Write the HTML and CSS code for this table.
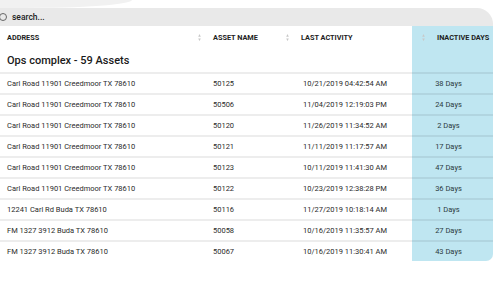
FILE: index.html
```html
<!DOCTYPE html>
<html>
<head>
<meta charset="utf-8">
<link rel="stylesheet" href="styles.css">
</head>
<body>
<div class="top"><div class="top-arc"></div></div>
<div class="search"><span class="search-ring"></span><span class="search-text">search...</span></div>
<div class="table">
  <div class="row head">
    <div class="c1">ADDRESS</div>
    <div class="c2"><svg class="sort" viewBox="0 0 3 8"><path d="M1.5 0 L3 3 L0 3 Z M1.5 8 L3 5 L0 5 Z"/></svg><span>ASSET NAME</span></div>
    <div class="c3"><svg class="sort" viewBox="0 0 3 8"><path d="M1.5 0 L3 3 L0 3 Z M1.5 8 L3 5 L0 5 Z"/></svg><span>LAST ACTIVITY</span></div>
    <div class="c4"><svg class="sort" viewBox="0 0 3 8"><path d="M1.5 0 L3 3 L0 3 Z M1.5 8 L3 5 L0 5 Z"/></svg><span>INACTIVE DAYS</span></div>
  </div>
  <div class="row group">
    <div class="c1 title">Ops complex - 59 Assets</div>
    <div class="c2"></div>
    <div class="c3"></div>
    <div class="c4"></div>
  </div>
  <div class="row data"><div class="c1">Carl Road 11901 Creedmoor TX 78610</div><div class="c2">50125</div><div class="c3">10/21/2019 04:42:54 AM</div><div class="c4">38 Days</div></div>
  <div class="row data"><div class="c1">Carl Road 11901 Creedmoor TX 78610</div><div class="c2">50506</div><div class="c3">11/04/2019 12:19:03 PM</div><div class="c4">24 Days</div></div>
  <div class="row data"><div class="c1">Carl Road 11901 Creedmoor TX 78610</div><div class="c2">50120</div><div class="c3">11/26/2019 11:34:52 AM</div><div class="c4">2 Days</div></div>
  <div class="row data"><div class="c1">Carl Road 11901 Creedmoor TX 78610</div><div class="c2">50121</div><div class="c3">11/11/2019 11:17:57 AM</div><div class="c4">17 Days</div></div>
  <div class="row data"><div class="c1">Carl Road 11901 Creedmoor TX 78610</div><div class="c2">50123</div><div class="c3">10/11/2019 11:41:30 AM</div><div class="c4">47 Days</div></div>
  <div class="row data"><div class="c1">Carl Road 11901 Creedmoor TX 78610</div><div class="c2">50122</div><div class="c3">10/23/2019 12:38:28 PM</div><div class="c4">36 Days</div></div>
  <div class="row data"><div class="c1">12241 Carl Rd Buda TX 78610</div><div class="c2">50116</div><div class="c3">11/27/2019 10:18:14 AM</div><div class="c4">1 Days</div></div>
  <div class="row data"><div class="c1">FM 1327 3912 Buda TX 78610</div><div class="c2">50058</div><div class="c3">10/16/2019 11:35:57 AM</div><div class="c4">27 Days</div></div>
  <div class="row data last"><div class="c1">FM 1327 3912 Buda TX 78610</div><div class="c2">50067</div><div class="c3">10/16/2019 11:30:41 AM</div><div class="c4">43 Days</div></div>
</div>
</body>
</html>
```
FILE: styles.css
```css
html, body {
  margin: 0;
  padding: 0;
  background: #ffffff;
  font-family: Roboto, "Liberation Sans", sans-serif;
  color: #222;
  width: 500px;
  height: 290px;
  overflow: hidden;
}
.top {
  height: 8px;
  display: flex;
}
.top-arc {
  width: 132px;
  height: 8px;
  background: #f1f1f1;
  border-bottom-right-radius: 110px 8px;
}
.search {
  width: 493px;
  height: 18px;
  background: #e9e9e9;
  border-top-right-radius: 16px;
  display: flex;
  align-items: center;
}
.search-ring {
  width: 6px;
  height: 6px;
  border: 1px solid #666;
  border-radius: 50%;
  margin-left: -1px;
}
.search-text {
  margin-left: 5px;
  font-size: 8.5px;
  font-weight: 500;
  color: #222;
}
.table {
  width: 493px;
}
.row {
  display: grid;
  grid-template-columns: 192px 94px 126px 81px;
}
.row > div {
  display: flex;
  align-items: center;
}
.c4 {
  background: #bfe6f1;
}
.head > div {
  height: 23px;
  font-size: 7.3px;
  font-weight: 700;
  color: #222;
}
.head .c1 { padding-left: 7px; }
.head .c2 { padding-left: 6px; }
.head .c3 { padding-left: 0; }
.head .c4 { padding-left: 10px; }
.sort {
  width: 3px;
  height: 7px;
  fill: #c8c8c8;
  margin-right: 12px;
  flex: none;
}
.group > div {
  height: 23px;
}
.title {
  padding-left: 7px;
  font-size: 11px;
  font-weight: 500;
  color: #1a1a1a;
}
.data > div {
  height: 19px;
  border-top: 2px solid rgba(0, 0, 0, 0.07);
  font-size: 7.5px;
  color: #2a2a2a;
}
.data .c1 { padding-left: 7px; }
.data .c2 { padding-left: 21px; }
.data .c3 { padding-left: 17px; }
.data .c4 { justify-content: center; padding-right: 8px; color: #2b3a40; }
.last .c4 {
  border-bottom-right-radius: 7px;
}
```
